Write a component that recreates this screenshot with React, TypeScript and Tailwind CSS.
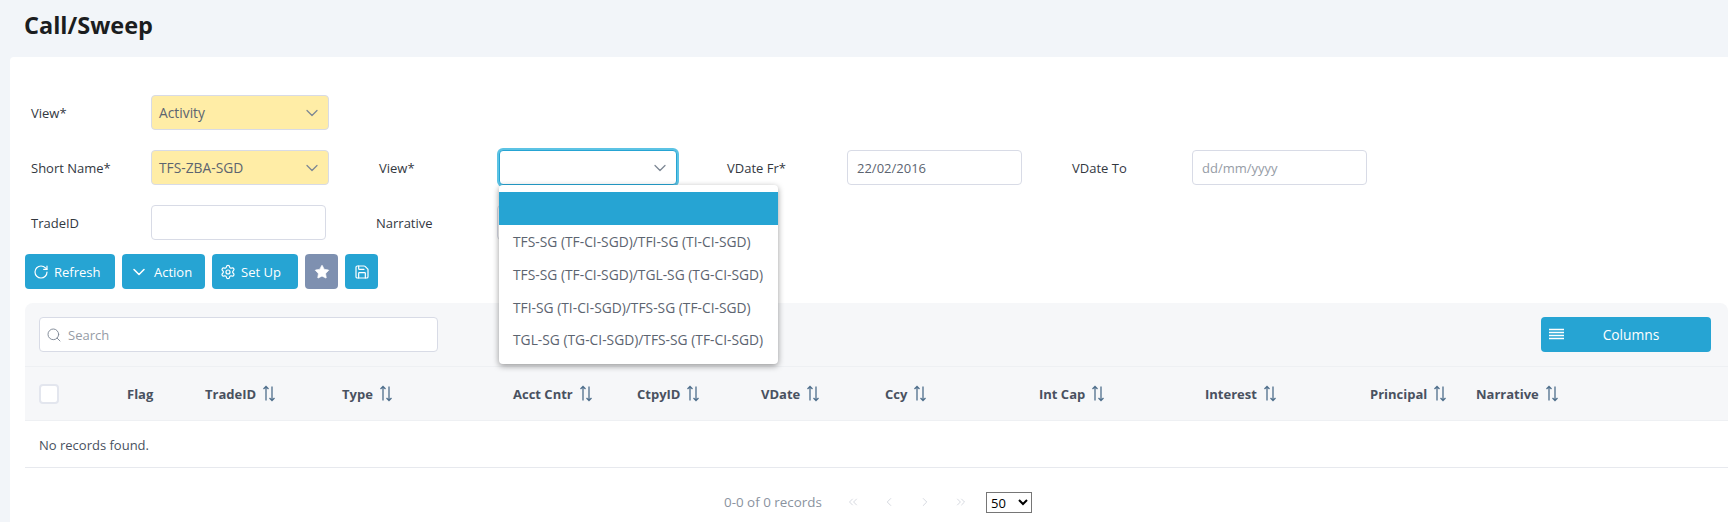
import { RotateCw, ChevronDown, Settings, Star, Save, Search, ChevronsLeft, ChevronLeft, ChevronRight, ChevronsRight } from "lucide-react";

const font = { fontFamily: '"Open Sans", "Noto Sans", sans-serif' };

function SortIcon() {
  return (
    <svg width="14" height="17" viewBox="0 0 14 17" fill="none" stroke="#4f6f8c" strokeWidth="1.3" className="ml-[6px] shrink-0">
      <path d="M4 15.5V1.5M1.5 4L4 1.5 6.5 4" />
      <path d="M10 1.5V15.5M7.5 13L10 15.5 12.5 13" />
    </svg>
  );
}

function Sel({ value, yellow, w }: { value: string; yellow?: boolean; w: string }) {
  return (
    <div className={`${w} h-[35px] shrink-0 flex items-center justify-between pl-[7px] pr-[6px] rounded-[4px] border border-[#d8dbe6] text-[13.8px] text-[#5c6470] ${yellow ? "bg-[#ffeda6]" : "bg-white"}`}>
      <span className="pt-[2px]">{value}</span>
      <ChevronDown size={20} strokeWidth={1.5} className="text-[#7d8794]" />
    </div>
  );
}

function Label({ children, w }: { children: string; w: string }) {
  return <div className={`${w} shrink-0 pt-[3px] text-[13px] text-[#33383f]`}>{children}</div>;
}

function Input({ w, value, placeholder }: { w: string; value?: string; placeholder?: string }) {
  return (
    <div className={`${w} h-[35px] shrink-0 flex items-center px-[9px] pt-[2px] rounded-[4px] border border-[#d8dbe6] bg-white text-[13px] ${value ? "text-[#5c6470]" : "text-[#969ca6]"}`}>
      {value || placeholder}
    </div>
  );
}

function Btn({ icon, label, gray, w }: { icon: React.ReactNode; label?: string; gray?: boolean; w: string }) {
  return (
    <button className={`${w} h-[35px] flex items-center rounded-[4px] text-white text-[13px] ${gray ? "bg-[#7e90b0]" : "bg-[#26a4d3]"} ${label ? "pl-[8px] gap-[5px]" : "justify-center"}`}>
      {icon}
      {label && <span className="pt-[3px]">{label}</span>}
    </button>
  );
}

const cols: [string, string, boolean][] = [
  ["Flag", "w-[78px]", false],
  ["TradeID", "w-[137px]", true],
  ["Type", "w-[171px]", true],
  ["Acct Cntr", "w-[124px]", true],
  ["CtpyID", "w-[124px]", true],
  ["VDate", "w-[124px]", true],
  ["Ccy", "w-[154px]", true],
  ["Int Cap", "w-[166px]", true],
  ["Interest", "w-[165px]", true],
  ["Principal", "w-[106px]", true],
  ["Narrative", "w-[150px]", true],
];

const options = [
  "TFS-SG (TF-CI-SGD)/TFI-SG (TI-CI-SGD)",
  "TFS-SG (TF-CI-SGD)/TGL-SG (TG-CI-SGD)",
  "TFI-SG (TI-CI-SGD)/TFS-SG (TF-CI-SGD)",
  "TGL-SG (TG-CI-SGD)/TFS-SG (TF-CI-SGD)",
];

export default function App() {
  return (
    <div style={font} className="h-[522px] overflow-hidden bg-[#f2f5f9]">
      <h1 className="h-[57px] pl-[24px] pt-[8px] text-[23.5px] leading-[34px] font-bold text-[#1b1d20]">Call/Sweep</h1>
      <div className="ml-[10px] h-[465px] rounded-tl-[4px] bg-white pl-[15px] pt-[38px]">
        <div className="flex items-center h-[35px] pl-[6px]">
          <Label w="w-[120px]">View*</Label>
          <Sel value="Activity" yellow w="w-[178px]" />
        </div>
        <div className="flex items-center h-[35px] mt-[20px] pl-[6px]">
          <Label w="w-[120px]">Short Name*</Label>
          <Sel value="TFS-ZBA-SGD" yellow w="w-[178px]" />
          <Label w="w-[120px] ml-[50px]">View*</Label>
          <div className="relative w-[178px] shrink-0">
            <div className="w-[178px] h-[35px] flex items-center justify-end pr-[6px] rounded-[4px] border border-[#26a4d3] bg-white ring-[2px] ring-[#5cc3e4]">
              <ChevronDown size={20} strokeWidth={1.5} className="text-[#7d8794]" />
            </div>
            <div className="absolute z-10 left-0 top-[35px] w-[279px] h-[179px] py-[7px] rounded-[4px] bg-white shadow-[0_2px_6px_rgba(0,0,0,0.4)] text-[13.8px] text-[#5c6470]">
              <div className="h-[33px] bg-[#26a4d3]" />
              {options.map((o) => (
                <div key={o} className="h-[32.67px] pt-[3px] flex items-center pl-[14px] whitespace-nowrap">{o}</div>
              ))}
            </div>
          </div>
          <Label w="w-[120px] ml-[50px]">VDate Fr*</Label>
          <Input w="w-[175px]" value="22/02/2016" />
          <Label w="w-[120px] ml-[50px]">VDate To</Label>
          <Input w="w-[175px]" placeholder="dd/mm/yyyy" />
        </div>
        <div className="flex items-center h-[35px] mt-[20px] pl-[6px]">
          <Label w="w-[120px]">TradeID</Label>
          <Input w="w-[175px]" />
          <Label w="w-[121px] ml-[50px]">Narrative</Label>
          <Input w="w-[175px]" />
        </div>
        <div className="flex gap-[7px] mt-[14px]">
          <Btn w="w-[90px]" icon={<RotateCw size={16} strokeWidth={1.8} />} label="Refresh" />
          <Btn w="w-[83px]" icon={<ChevronDown size={20} strokeWidth={1.9} className="-ml-[1px]" />} label="Action" />
          <Btn w="w-[86px]" icon={<Settings size={16} strokeWidth={1.8} />} label="Set Up" />
          <Btn w="w-[33px]" gray icon={<Star size={16} fill="white" strokeWidth={1} />} />
          <Btn w="w-[33px]" icon={<Save size={16} strokeWidth={1.8} />} />
        </div>
        <div className="mt-[14px] rounded-t-[8px] bg-[#f6f7f9] h-[118px]">
          <div className="h-[64px] pl-[14px] pr-[17px] flex items-center justify-between border-b border-[#eef0f3]">
            <div className="w-[399px] h-[35px] rounded-[4px] border border-[#d8dbe6] bg-white flex items-center pl-[6px] gap-[6px] text-[13px] text-[#969ca6]">
              <Search size={16} strokeWidth={1.4} className="text-[#7d8794]" />
              <span className="pt-[2px]">Search</span>
            </div>
            <button className="w-[170px] h-[35px] rounded-[4px] bg-[#26a4d3] flex items-center pl-[8px] text-[13.8px] text-white">
              <svg width="15" height="13" viewBox="0 0 15 13" fill="none" stroke="white" strokeWidth="1.3">
                <path d="M0 1.5h15M0 4.5h15M0 7.5h15M0 10.5h15" />
              </svg>
              <span className="flex-1 text-center pr-[13px] pt-[1px]">Columns</span>
            </button>
          </div>
          <div className="h-[54px] flex items-center pl-[14px] border-b border-[#eef0f3]">
            <div className="w-[88px] shrink-0">
              <div className="w-[20px] h-[20px] rounded-[4px] border-2 border-[#e3e6ee] bg-white" />
            </div>
            {cols.map(([n, w, s]) => (
              <div key={n} className={`${w} shrink-0 flex items-center text-[13px] font-bold text-[#495160]`}>
                <span className="pt-[3px]">{n}</span>
                {s && <SortIcon />}
              </div>
            ))}
          </div>
        </div>
        <div className="h-[47px] flex items-center pl-[14px] pt-[3px] border-b border-[#e7e9ee] text-[13px] text-[#495160]">No records found.</div>
        <div className="flex items-center h-[68px] pl-[699px] text-[13.4px] text-[#8a93a0]">
          <span className="w-[122px] pt-[1px]">0-0 of 0 records</span>
          <div className="w-[140px] flex items-center text-[#c4c9d2]">
            <div className="w-[36px]"><ChevronsLeft size={14} strokeWidth={1.2} /></div>
            <div className="w-[36px]"><ChevronLeft size={14} strokeWidth={1.2} /></div>
            <div className="w-[36px]"><ChevronRight size={14} strokeWidth={1.2} /></div>
            <div className="w-[32px]"><ChevronsRight size={14} strokeWidth={1.2} /></div>
          </div>
          <select defaultValue="50" className="w-[46px] h-[21px] border border-[#767676] bg-white text-[13px] text-black">
            <option>50</option>
          </select>
        </div>
      </div>
    </div>
  );
}
